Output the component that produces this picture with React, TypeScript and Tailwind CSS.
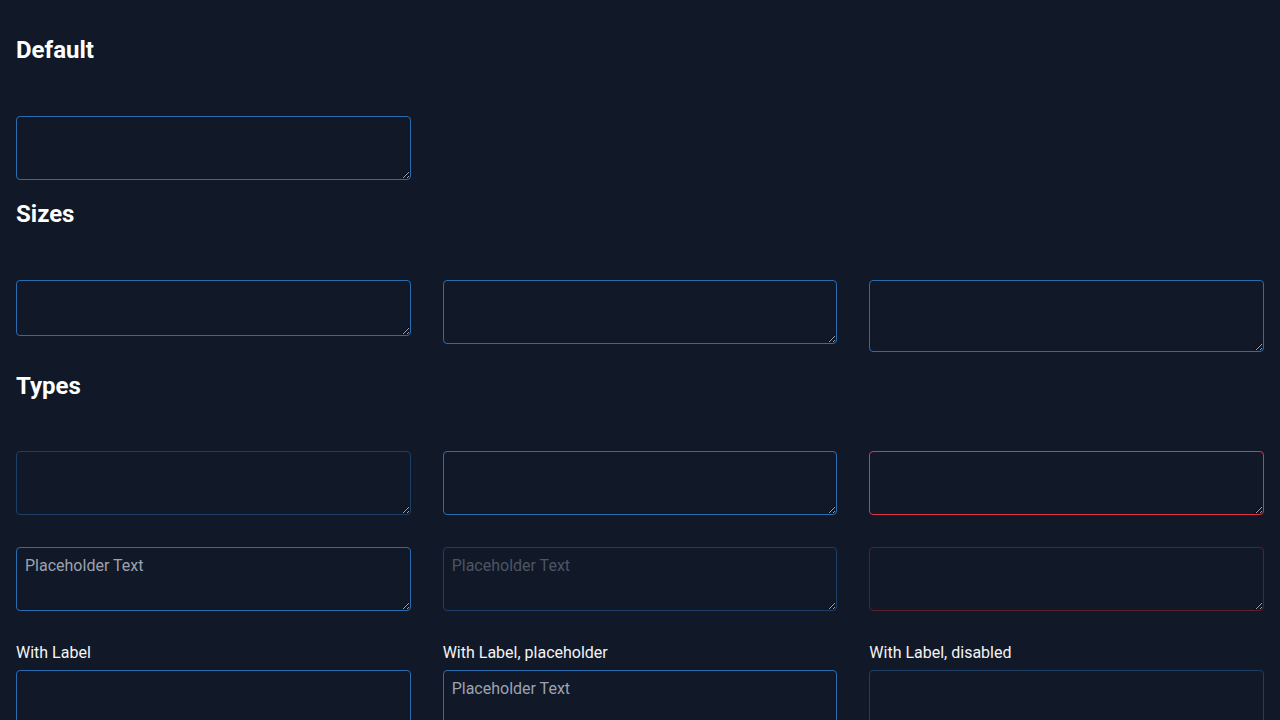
import React from 'react';

type Variant = 'default' | 'disabled' | 'error' | 'errorDisabled';

const borderFor: Record<Variant, string> = {
  default: 'border-[#2b6cb0]',
  disabled: 'border-[#1d3f66]',
  error: 'border-[#dc3545]',
  errorDisabled: 'border-[#5c2029]',
};

const TextArea: React.FC<{
  variant?: Variant;
  height?: string;
  placeholder?: string;
}> = ({ variant = 'default', height = 'h-16', placeholder }) => {
  const disabled = variant === 'disabled' || variant === 'errorDisabled';
  return (
    <textarea
      disabled={disabled}
      placeholder={placeholder}
      className={`block w-full ${height} rounded border ${borderFor[variant]} bg-transparent px-2 py-2 text-base leading-5 text-gray-100 outline-none ${
        disabled ? 'placeholder:text-[#4b5563]' : 'placeholder:text-[#9ca3af]'
      }`}
    />
  );
};

const Section: React.FC<{ title: string; gap?: string; children: React.ReactNode }> = ({
  title,
  gap = 'mt-[50px]',
  children,
}) => (
  <section className="pt-[18px]">
    <h2 className="text-2xl leading-8 font-bold text-white">{title}</h2>
    <div className={gap}>{children}</div>
  </section>
);

const Labeled: React.FC<{ label: string; children: React.ReactNode }> = ({ label, children }) => (
  <div>
    <label className="block text-base leading-[19px] text-gray-100 mb-2">{label}</label>
    {children}
  </div>
);

const App: React.FC = () => {
  return (
    <div
      className="min-h-screen w-full bg-[#111827] px-4 pt-4 pb-8 text-white"
      style={{ fontFamily: 'Roboto, "Noto Sans", sans-serif' }}
    >
      <Section title="Default">
        <div className="grid grid-cols-3 gap-8">
          <TextArea />
        </div>
      </Section>

      <Section title="Sizes">
        <div className="grid grid-cols-3 gap-8 items-start">
          <TextArea height="h-14" />
          <TextArea height="h-16" />
          <TextArea height="h-[72px]" />
        </div>
      </Section>

      <Section title="Types" gap="mt-[49px]">
        <div className="grid grid-cols-3 gap-x-8 gap-y-8 items-start">
          <TextArea variant="disabled" />
          <TextArea />
          <TextArea variant="error" />

          <TextArea placeholder="Placeholder Text" />
          <TextArea variant="disabled" placeholder="Placeholder Text" />
          <TextArea variant="errorDisabled" />

          <Labeled label="With Label">
            <TextArea />
          </Labeled>
          <Labeled label="With Label, placeholder">
            <TextArea placeholder="Placeholder Text" />
          </Labeled>
          <Labeled label="With Label, disabled">
            <TextArea variant="disabled" />
          </Labeled>
        </div>
      </Section>
    </div>
  );
};

export default App;
